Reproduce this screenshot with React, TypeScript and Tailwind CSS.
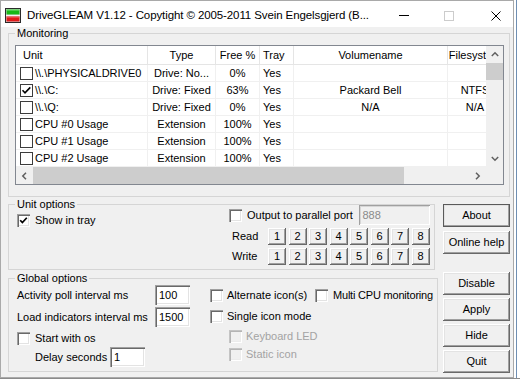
import React from "react";

const sunken =
  "shadow-[inset_1px_1px_0_#a0a0a0,inset_2px_2px_0_#696969,inset_-1px_-1px_0_#ffffff,inset_-2px_-2px_0_#e3e3e3]";
const raised =
  "shadow-[inset_-1px_-1px_0_#696969,inset_1px_1px_0_#ffffff,inset_-2px_-2px_0_#a0a0a0,inset_2px_2px_0_#e3e3e3]";

function CheckMark() {
  return (
    <svg width="9" height="9" viewBox="0 0 9 9" className="block">
      <path d="M1.2 4.2 L3.4 6.6 L7.8 1.8" fill="none" stroke="#000" strokeWidth="1.7" />
    </svg>
  );
}

function Check3D({ checked = false, disabled = false }: { checked?: boolean; disabled?: boolean }) {
  return (
    <span
      className={
        disabled
          ? "flex shrink-0 items-center justify-center w-[13px] h-[13px] bg-[#f0f0f0] shadow-[inset_1px_1px_0_#c4c4c4,inset_2px_2px_0_#b4b4b4,inset_-1px_-1px_0_#ffffff,inset_-2px_-2px_0_#ececec]"
          : "flex shrink-0 items-center justify-center w-[13px] h-[13px] bg-white shadow-[inset_1px_1px_0_#a0a0a0,inset_2px_2px_0_#696969,inset_-1px_-1px_0_#ffffff,inset_-2px_-2px_0_#e3e3e3]"
      }
    >
      {checked && <CheckMark />}
    </span>
  );
}

function FlatCheck({ checked = false }: { checked?: boolean }) {
  return (
    <span className="flex shrink-0 items-center justify-center w-[13px] h-[13px] border border-[#3c3c3c] bg-white">
      {checked && (
        <svg width="11" height="11" viewBox="0 0 11 11" className="block">
          <path d="M1.5 5.3 L4 7.8 L9.3 2.4" fill="none" stroke="#000" strokeWidth="1.6" />
        </svg>
      )}
    </span>
  );
}

function Field({ value, className }: { value: string; className: string }) {
  return (
    <div className={`flex shrink-0 items-center h-[20px] pl-[4px] bg-white ${sunken} ${className}`}>{value}</div>
  );
}

function Btn({ label, className = "" }: { label: string; className?: string }) {
  return (
    <div className={`flex shrink-0 items-center justify-center bg-[#f0f0f0] ${raised} ${className}`}>{label}</div>
  );
}

function Chevron({ dir }: { dir: "up" | "down" | "left" | "right" }) {
  const d =
    dir === "up"
      ? "M0.8 5 L4 1.8 L7.2 5"
      : dir === "down"
      ? "M0.8 2 L4 5.2 L7.2 2"
      : dir === "left"
      ? "M5 0.8 L1.8 4 L5 7.2"
      : "M2 0.8 L5.2 4 L2 7.2";
  return (
    <svg width="8" height="8" viewBox="0 0 8 8" className="block">
      <path d={d} fill="none" stroke="#606060" strokeWidth="1.5" />
    </svg>
  );
}

const rows = [
  { c: false, unit: "\\\\.\\PHYSICALDRIVE0", type: "Drive: No...", free: "0%", tray: "Yes", vol: "", fs: "" },
  { c: true, unit: "\\\\.\\C:", type: "Drive: Fixed", free: "63%", tray: "Yes", vol: "Packard Bell", fs: "NTFS" },
  { c: false, unit: "\\\\.\\Q:", type: "Drive: Fixed", free: "0%", tray: "Yes", vol: "N/A", fs: "N/A" },
  { c: false, unit: "CPU #0 Usage", type: "Extension", free: "100%", tray: "Yes", vol: "", fs: "" },
  { c: false, unit: "CPU #1 Usage", type: "Extension", free: "100%", tray: "Yes", vol: "", fs: "" },
  { c: false, unit: "CPU #2 Usage", type: "Extension", free: "100%", tray: "Yes", vol: "", fs: "" },
];

function ListView() {
  return (
    <div className="mt-[5px] w-[489px] h-[140px] shrink-0 border border-[#828790] bg-white flex flex-col">
      <div className="flex flex-row h-[121px]">
        <div className="w-[470px] overflow-hidden flex flex-col">
          <div className="flex flex-row h-[19px] shrink-0 border-b border-[#e5e5e5]">
            <div className="w-[132px] shrink-0 flex items-center pl-[7px] border-r border-[#e5e5e5]">Unit</div>
            <div className="w-[68px] shrink-0 flex items-center justify-center border-r border-[#e5e5e5]">Type</div>
            <div className="w-[44px] shrink-0 flex items-center justify-center border-r border-[#e5e5e5]">Free %</div>
            <div className="w-[34px] shrink-0 flex items-center pl-[3px] border-r border-[#e5e5e5]">Tray</div>
            <div className="w-[154px] shrink-0 flex items-center justify-center border-r border-[#e5e5e5]">Volumename</div>
            <div className="w-[54px] shrink-0 flex items-center justify-center">Filesystem</div>
          </div>
          {rows.map((r, i) => (
            <div key={i} className="flex flex-row h-[17px] shrink-0 border-b border-[#f0f0f0]">
              <div className="w-[132px] shrink-0 flex items-center gap-[2px] pl-[4px] border-r border-[#f0f0f0]">
                <FlatCheck checked={r.c} />
                <span>{r.unit}</span>
              </div>
              <div className="w-[68px] shrink-0 flex items-center justify-center border-r border-[#f0f0f0]">{r.type}</div>
              <div className="w-[44px] shrink-0 flex items-center justify-center border-r border-[#f0f0f0]">{r.free}</div>
              <div className="w-[34px] shrink-0 flex items-center pl-[3px] border-r border-[#f0f0f0]">{r.tray}</div>
              <div className="w-[154px] shrink-0 flex items-center justify-center border-r border-[#f0f0f0]">{r.vol}</div>
              <div className="w-[54px] shrink-0 flex items-center justify-center">{r.fs}</div>
            </div>
          ))}
        </div>
        <div className="w-[17px] shrink-0 flex flex-col bg-[#f0f0f0]">
          <div className="h-[17px] flex items-center justify-center">
            <Chevron dir="up" />
          </div>
          <div className="h-[17px] bg-[#cdcdcd]" />
          <div className="flex-1" />
          <div className="h-[17px] flex items-center justify-center">
            <Chevron dir="down" />
          </div>
        </div>
      </div>
      <div className="flex flex-row h-[17px]">
        <div className="w-[470px] flex flex-row bg-[#f0f0f0]">
          <div className="w-[17px] flex items-center justify-center">
            <Chevron dir="left" />
          </div>
          <div className="w-[371px] bg-[#cdcdcd]" />
          <div className="flex-1" />
          <div className="w-[17px] flex items-center justify-center">
            <Chevron dir="right" />
          </div>
        </div>
        <div className="w-[17px] bg-[#f0f0f0]" />
      </div>
    </div>
  );
}

function DigitRow({ label }: { label: string }) {
  return (
    <div className="mt-[3px] h-[17px] flex flex-row items-center">
      <div className="w-[39px] pl-[3px]">{label}</div>
      <div className="flex flex-row gap-[2.5px]">
        {["1", "2", "3", "4", "5", "6", "7", "8"].map((n) => (
          <Btn key={n} label={n} className="w-[18px] h-[17px]" />
        ))}
      </div>
    </div>
  );
}

function TitleBar() {
  return (
    <div className="h-[26px] shrink-0 bg-white flex flex-row items-center pt-[3px] text-[11.5px] tracking-[-0.1px]">
      <svg width="16" height="15" viewBox="0 0 16 15" className="ml-[4px] block shrink-0">
        <rect x="0.5" y="0.5" width="15" height="14" fill="#d8d8d8" stroke="#2b2b2b" />
        <rect x="1.5" y="1.5" width="13" height="5" fill="#18b818" />
        <rect x="1.5" y="1.5" width="13" height="1" fill="#7ee07e" />
        <rect x="1" y="7" width="14" height="1" fill="#f4f4f4" />
        <rect x="1.5" y="8.5" width="13" height="5" fill="#e01a1a" />
        <rect x="1.5" y="8.5" width="13" height="1" fill="#f07070" />
      </svg>
      <span className="ml-[6px]">DriveGLEAM V1.12 - Copytight © 2005-2011 Svein Engelsgjerd (B...</span>
      <div className="flex-1" />
      <div className="w-[45px] h-[20px] flex items-center justify-center">
        <span className="block w-[10px] h-[1px] bg-black" />
      </div>
      <div className="w-[45px] h-[20px] flex items-center justify-center">
        <span className="block w-[10px] h-[10px] border border-[#cccccc]" />
      </div>
      <div className="w-[42px] h-[20px] flex items-center justify-end pr-[12px]">
        <svg width="10" height="10" viewBox="0 0 10 10" className="block">
          <path d="M0.5 0.5 L9.5 9.5 M9.5 0.5 L0.5 9.5" stroke="#000" strokeWidth="1" />
        </svg>
      </div>
    </div>
  );
}

export default function App() {
  return (
    <div className="w-[520px] h-[384px] overflow-hidden bg-white flex flex-col font-['Liberation_Sans',Arial,sans-serif] text-[11px] leading-[13px] text-black whitespace-nowrap">
      <div className="flex flex-row h-[378px] shrink-0">
        <div className="w-[514px] h-[378px] shrink-0 flex flex-col border border-[#a9a9a9] bg-[#f0f0f0]">
          <TitleBar />
          <div className="flex flex-col">
            <fieldset className="ml-[7px] w-[502px] border border-[#d5d5d5] pl-[6px] pb-[11px]">
              <legend className="px-[2px] leading-[13px]">Monitoring</legend>
              <ListView />
            </fieldset>
            <div className="flex flex-row">
              <div className="ml-[7px] w-[426px] flex flex-col">
                <fieldset className="mt-[1px] border border-[#d5d5d5] pl-[6px] pr-[4px] pb-[4px]">
                  <legend className="px-[2px] leading-[13px]">Unit options</legend>
                  <div className="flex flex-row">
                    <div className="w-[214px] shrink-0 pl-[2px] pt-[3px]">
                      <div className="h-[13px] flex flex-row items-center gap-[5px]">
                        <Check3D checked />
                        <span>Show in tray</span>
                      </div>
                    </div>
                    <div className="flex-1 flex flex-col mt-[-6px]">
                      <div className="h-[20px] flex flex-row items-center">
                        <Check3D />
                        <span className="ml-[5px]">Output to parallel port</span>
                        <div className="ml-auto w-[71px] h-[20px] flex items-center pl-[4px] bg-[#f0f0f0] text-[#8a8a8a] shadow-[inset_1px_1px_0_#a0a0a0,inset_-1px_-1px_0_#ffffff,inset_2px_2px_0_#d6d6d6]">
                          888
                        </div>
                      </div>
                      <DigitRow label="Read" />
                      <DigitRow label="Write" />
                    </div>
                  </div>
                </fieldset>
                <fieldset className="mt-[2px] border border-[#d5d5d5] pl-[6px] pr-[4px] pb-[4px]">
                  <legend className="px-[2px] leading-[13px]">Global options</legend>
                  <div className="flex flex-row">
                    <div className="w-[195px] shrink-0 pl-[2px] flex flex-col">
                      <div className="h-[20px] flex flex-row items-center">
                        <span className="w-[138px] shrink-0">Activity poll interval ms</span>
                        <Field value="100" className="w-[35px]" />
                      </div>
                      <div className="mt-[2px] h-[20px] flex flex-row items-center">
                        <span className="w-[138px] shrink-0">Load indicators interval ms</span>
                        <Field value="1500" className="w-[35px]" />
                      </div>
                      <div className="mt-[5px] h-[13px] flex flex-row items-center gap-[5px]">
                        <Check3D />
                        <span>Start with os</span>
                      </div>
                      <div className="mt-[2px] h-[20px] flex flex-row items-center pl-[18px]">
                        <span className="w-[75px] shrink-0">Delay seconds</span>
                        <Field value="1" className="w-[35px]" />
                      </div>
                    </div>
                    <div className="flex-1 flex flex-col">
                      <div className="h-[21px] flex flex-row items-center">
                        <div className="w-[105px] shrink-0 flex flex-row items-center gap-[4px]">
                          <Check3D />
                          <span>Alternate icon(s)</span>
                        </div>
                        <div className="flex flex-row items-center gap-[5px] tracking-[-0.2px]">
                          <Check3D />
                          <span>Multi CPU monitoring</span>
                        </div>
                      </div>
                      <div className="h-[21px] flex flex-row items-center gap-[4px]">
                        <Check3D />
                        <span>Single icon mode</span>
                      </div>
                      <div className="h-[18px] flex flex-row items-center gap-[4px] pl-[19px] text-[#a3a3a3]">
                        <Check3D disabled />
                        <span>Keyboard LED</span>
                      </div>
                      <div className="h-[19px] flex flex-row items-center gap-[4px] pl-[19px] text-[#a3a3a3]">
                        <Check3D disabled />
                        <span>Static icon</span>
                      </div>
                    </div>
                  </div>
                </fieldset>
              </div>
              <div className="ml-[9px] w-[67px] flex flex-col">
                <Btn label="About" className="mt-[7px] h-[23px] outline outline-1 outline-[#5a5a5a] outline-offset-[-1px]" />
                <Btn label="Online help" className="mt-[4px] h-[23px]" />
                <Btn label="Disable" className="mt-[18px] h-[23px]" />
                <Btn label="Apply" className="mt-[3px] h-[23px]" />
                <Btn label="Hide" className="mt-[3px] h-[23px]" />
                <Btn label="Quit" className="mt-[3px] h-[23px]" />
              </div>
            </div>
          </div>
        </div>
        <div className="flex-1 flex flex-row bg-white">
          <div className="ml-[2px] w-[1px] h-full bg-[#6f8fb3]" />
        </div>
      </div>
      <div className="h-[6px] bg-white border-t border-[#8a8a8a]" />
    </div>
  );
}
